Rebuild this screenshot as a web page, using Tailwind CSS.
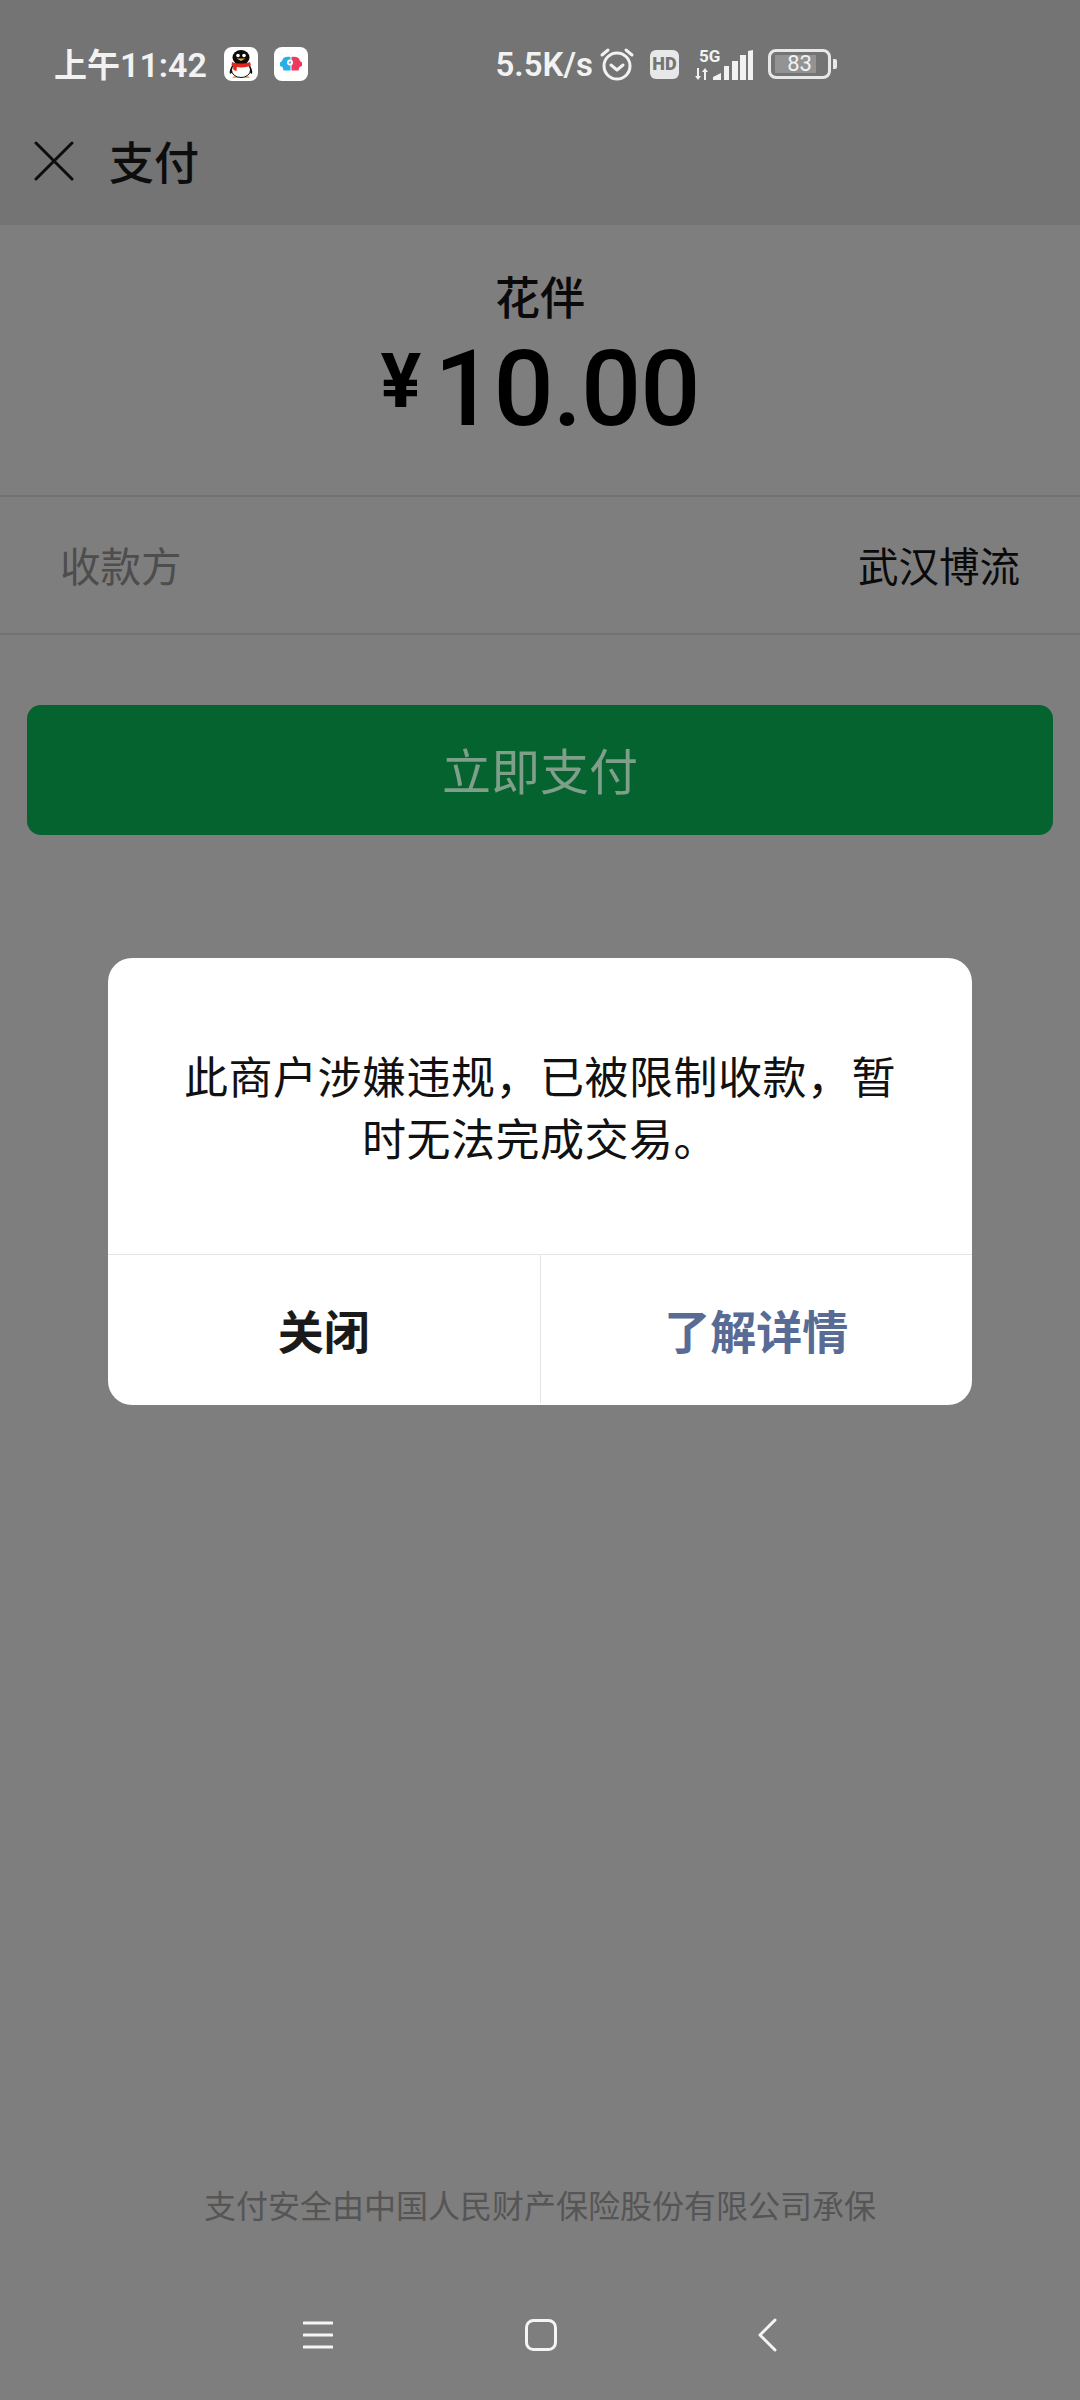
<!DOCTYPE html>
<html lang="zh-CN">
<head>
    <meta charset="UTF-8">
    <meta name="viewport" content="width=device-width, initial-scale=1.0">
    <title>支付</title>
    <script src="https://cdn.jsdelivr.net/npm/@tailwindcss/browser@4"></script>
</head>
<body class="bg-[#7e7e7e] font-['Noto_Sans_CJK_SC','Noto_Sans',sans-serif]">
    <div class="relative flex flex-col w-[1080px] h-[2400px] overflow-hidden">
        <!-- status bar + title -->
        <header class="bg-[#747474]">
            <div class="flex items-center justify-between h-[112px] pt-[16px] pl-[54px] pr-[243px] text-[#f2f2f2]">
                <div class="flex items-center">
                    <span class="w-[154px] text-[33px] font-bold leading-none whitespace-nowrap">上午<span class="font-['Roboto'] text-[34px] font-semibold">11:42</span></span>
                    <div class="ml-[16px] w-[34px] h-[34px] rounded-[8px] bg-white">
                        <svg viewBox="0 0 34 34" class="w-[34px] h-[34px]">
                            <path d="M10 29l-2 2h7zM24 29l2 2h-7z" fill="#f0a81e"/>
                            <path d="M9 17c-2 3-4 7-3 10l3-2zM25 17c2 3 4 7 3 10l-3-2z" fill="#0b0b0b"/>
                            <ellipse cx="17" cy="23" rx="9.500" ry="7.500" fill="#fff" stroke="#0b0b0b" stroke-width="1"/>
                            <ellipse cx="17" cy="10.500" rx="8.500" ry="7.500" fill="#0b0b0b"/>
                            <circle cx="14" cy="8.500" r="1.800" fill="#fff"/><circle cx="20" cy="8.500" r="1.800" fill="#fff"/>
                            <path d="M12.500 11.500h9l-4.500 2.500z" fill="#f0a81e"/>
                            <path d="M8 15c5 2 13 2 18 0l1 3.500c-6 2.500-14 2.500-19.500 0z" fill="#e2261c"/>
                            <path d="M9 19h4l-.5 5-3-1z" fill="#e2261c"/>
                        </svg>
                    </div>
                    <div class="ml-[16px] w-[34px] h-[34px] rounded-[8px] bg-white">
                        <svg viewBox="0 0 34 34" class="w-[34px] h-[34px]">
                            <path d="M16.500 10c-4.500-1-8 .5-8.500 4l-2 1.500 0 3.500 2.500 1 1 3.500h7z" fill="#29aee6"/>
                            <path d="M17.500 10c4.500-1 8 .5 8.500 4l2 1.500 0 3.500-2.500 1-1 3.500h-7z" fill="#f0385f"/>
                            <circle cx="16" cy="15.500" r="3" fill="#fff"/>
                            <circle cx="16" cy="15.500" r="1.200" fill="#6fb5dc"/>
                        </svg>
                    </div>
                </div>
                <div class="flex items-center">
                    <span class="font-['Roboto'] text-[33px] font-semibold leading-none">5.5K/s</span>
                    <svg viewBox="0 0 36 34" fill="none" stroke="currentColor" stroke-width="3" stroke-linecap="round" stroke-linejoin="round" class="ml-[6px] w-[36px] h-[34px]">
                        <circle cx="18" cy="19" r="13"/>
                        <path d="M12 18l6 5 6-5M3 8l6-5M33 8l-6-5"/>
                    </svg>
                    <span class="ml-[15px] flex items-center justify-center w-[29px] h-[29px] rounded-[6px] bg-[#e8e8e8] text-[#747474] font-['Roboto'] text-[18px] font-black leading-none">HD</span>
                    <div class="relative ml-[16px] w-[60px] h-[31px]">
                        <span class="absolute left-[4px] top-[-1px] font-['Roboto'] text-[17px] font-bold leading-none">5G</span>
                        <svg viewBox="0 0 60 31" fill="currentColor" class="w-[60px] h-[31px]">
                            <path d="M2 19h2v8h2l-3 4-3-4h2zM9 31h2v-8h2l-3-4-3 4h2z"/>
                            <path d="M18 31v-3l8-4v7zM29 31V17h5v14zM37 31V12h6v19zM45 31V6h6v25zM53 31V2l5-1v30z"/>
                        </svg>
                    </div>
                    <div class="relative ml-[13px] flex items-center justify-center w-[63px] h-[30px] rounded-[8px] border-[3px] border-[#e8e8e8]">
                        <div class="absolute left-[4px] top-[3px] bottom-[3px] w-[41px] bg-[#939393]"></div>
                        <span class="relative font-['Roboto'] text-[22px] leading-none">83</span>
                    </div>
                    <div class="ml-[2px] w-[4px] h-[10px] rounded-r-[2px] bg-[#e8e8e8]"></div>
                </div>
            </div>
            <div class="flex items-center h-[113px] pb-[16px] pl-[34px] text-[#0d0d0d]">
                <svg viewBox="0 0 40 40" fill="none" stroke="currentColor" stroke-width="3" stroke-linecap="round" class="w-[40px] h-[40px]">
                    <path d="M2 2l36 36M38 2L2 38"/>
                </svg>
                <h1 class="ml-[35px] text-[45px] font-medium leading-none">支付</h1>
            </div>
        </header>

        <!-- amount -->
        <section class="flex flex-col items-center h-[272px] pt-[40px] border-b-2 border-[#727272] text-[#0a0a0a]">
            <p class="text-[45px] font-medium leading-[61px]">花伴</p>
            <div class="flex items-start h-[121px] text-black">
                <span class="mt-[17px] mr-[13px] font-['Roboto'] text-[76px] font-bold leading-[76px]">¥</span>
                <span class="mt-[5px] font-['Roboto'] text-[106px] font-medium leading-[116px] tracking-[-1px]">10.00</span>
            </div>
        </section>

        <!-- payee -->
        <div class="flex items-center justify-between h-[138px] px-[60px] border-b-2 border-[#727272] text-[40.5px]">
            <span class="text-[#4d4d4d]">收款方</span>
            <span class="text-[#0a0a0a]">武汉博流</span>
        </div>

        <button class="flex items-center justify-center mt-[70px] mx-[27px] h-[130px] pb-[2px] rounded-[14px] bg-[#05632f] text-[49px] text-[#7f9f8b]">立即支付</button>

        <p class="mt-auto text-center text-[32px] leading-[44px] text-[#555555]">支付安全由中国人民财产保险股份有限公司承保</p>

        <!-- navigation bar -->
        <nav class="flex items-center justify-center h-[130px] mt-[44px] text-[#f5f5f5]">
            <svg viewBox="0 0 30 28" fill="none" stroke="currentColor" stroke-width="3" stroke-linecap="round" class="w-[30px] h-[28px]">
                <path d="M1 2h28M1 14h28M1 26h28"/>
            </svg>
            <svg viewBox="0 0 32 32" fill="none" stroke="currentColor" stroke-width="3" class="ml-[192px] w-[32px] h-[32px]">
                <rect x="1.500" y="1.500" width="29" height="29" rx="7"/>
            </svg>
            <svg viewBox="0 0 20 34" fill="none" stroke="currentColor" stroke-width="3" stroke-linecap="round" stroke-linejoin="round" class="ml-[200px] w-[20px] h-[34px]">
                <path d="M18 2L3 17l15 15"/>
            </svg>
        </nav>

        <!-- restricted merchant dialog -->
        <div class="absolute left-[108px] top-[958px] flex flex-col w-[864px] h-[447px] rounded-[24px] bg-white">
            <p class="flex-1 flex items-center justify-center px-[72px] text-center text-[44px] leading-[62px] tracking-[0.5px] text-[#111111]">此商户涉嫌违规，已被限制收款，暂时无法完成交易。</p>
            <div class="flex h-[151px] pb-[2px] border-t border-[#e5e5e5] text-[46px] font-bold">
                <button class="flex-1 text-[#1a1a1a]">关闭</button>
                <button class="flex-1 border-l border-[#e5e5e5] text-[#576b95]">了解详情</button>
            </div>
        </div>
    </div>
</body>
</html>
